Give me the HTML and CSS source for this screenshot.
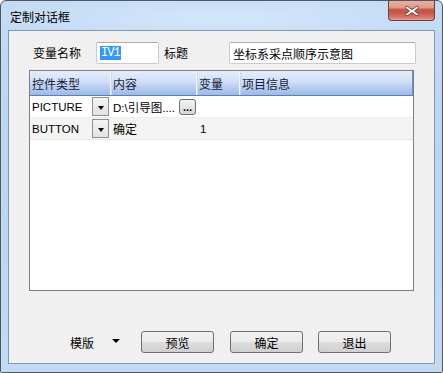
FILE: index.html
```html
<!DOCTYPE html>
<html>
<head>
<meta charset="utf-8">
<link rel="stylesheet" href="styles.css">
</head>
<body>
<div class="window">
  <div class="titlebar">
    <span class="title">定制对话框</span>
    <div class="close">
      <svg width="16" height="12" viewBox="0 0 16 12">
        <path d="M3 1 L8 4.5 L13 1 L15 2.5 L10.5 6 L15 9.5 L13 11 L8 7.5 L3 11 L1 9.5 L5.5 6 L1 2.5 Z" fill="#ffffff" stroke="#5a2a22" stroke-width="0.8" stroke-linejoin="round"/>
      </svg>
    </div>
  </div>
  <div class="client">
    <div class="fields">
      <span class="lbl lbl1">变量名称</span>
      <div class="input small"><span class="sel">IV1</span></div>
      <span class="lbl lbl2">标题</span>
      <div class="input wide">坐标系采点顺序示意图</div>
    </div>
    <div class="grid">
      <div class="thead">
        <div class="th c1">控件类型</div>
        <div class="th c2">内容</div>
        <div class="th c3">变量</div>
        <div class="th c4">项目信息</div>
      </div>
      <div class="row r1">
        <div class="td c1"><span class="en">PICTURE</span><span class="combo"><span class="arrow"></span></span></div>
        <div class="td c2"><span class="en">D:\引导图....</span><span class="dots">...</span></div>
        <div class="td c3"></div>
        <div class="td c4"></div>
      </div>
      <div class="row r2">
        <div class="td c1"><span class="en">BUTTON</span><span class="combo"><span class="arrow"></span></span></div>
        <div class="td c2">确定</div>
        <div class="td c3"><span class="en">1</span></div>
        <div class="td c4"></div>
      </div>
    </div>
    <div class="footer">
      <span class="tpl">模版</span>
      <span class="tri"></span>
      <span class="btn b1">预览</span>
      <span class="btn b2">确定</span>
      <span class="btn b3">退出</span>
    </div>
  </div>
</div>
</body>
</html>
```

FILE: styles.css
```css
html, body {
  margin: 0;
  padding: 0;
  background: #ffffff;
}
body {
  font-family: "Noto Sans CJK SC", "DejaVu Sans", sans-serif;
  font-size: 12px;
  color: #000;
}
.window {
  box-sizing: border-box;
  width: 443px;
  height: 373px;
  border: 1px solid #4f5660;
  border-radius: 6px 6px 2px 2px;
  padding: 0 7px 8px 7px;
  background: linear-gradient(180deg, #c4dbf4 0%, #bcd5f0 40%, #c2daf3 100%);
  display: flex;
  flex-direction: column;
}
.titlebar {
  height: 29px;
  display: flex;
  justify-content: space-between;
  align-items: flex-start;
  background: radial-gradient(ellipse 55% 90% at 50% 60%, #d3e7fc 0%, rgba(211,231,252,0) 100%);
  margin: 0 -7px;
  padding: 0 7px;
}
.title {
  margin-left: 2px;
  margin-top: 7px;
  line-height: 17px;
  font-size: 12px;
  color: #000;
}
.close {
  box-sizing: border-box;
  width: 47px;
  height: 20px;
  margin-top: 0;
  border: 1px solid #7c3a31;
  border-top: none;
  border-radius: 0 0 4px 4px;
  background: linear-gradient(180deg, #eab0a2 0%, #de9a8a 35%, #c8574b 45%, #c55548 60%, #d5766a 85%, #e2a091 100%);
  display: flex;
  align-items: center;
  justify-content: center;
}
.client {
  box-sizing: border-box;
  height: 334px;
  border: 1px solid #8497ad;
  background: #f0f0f0;
  display: flex;
  flex-direction: column;
}
.fields {
  display: flex;
  align-items: center;
  margin-top: 11px;
  height: 22px;
}
.lbl {
  line-height: 16px;
}
.lbl1 {
  margin-left: 24px;
  width: 63px;
}
.lbl2 {
  margin-left: 5px;
  width: 65px;
}
.input {
  box-sizing: border-box;
  height: 22px;
  border: 1px solid #c7ccd3;
  border-top-color: #abadb3;
  border-radius: 2px;
  background: #ffffff;
  display: flex;
  align-items: center;
}
.small {
  width: 63px;
  padding-left: 3px;
}
.wide {
  width: 187px;
  padding-left: 3px;
}
.sel {
  background: #3399ff;
  color: #ffffff;
  font-family: "Liberation Mono", "DejaVu Sans Mono", monospace;
  font-size: 12px;
  line-height: 14px;
  padding: 0 1px;
  letter-spacing: -1px;
}
.grid {
  box-sizing: border-box;
  margin-top: 6px;
  margin-left: 20px;
  width: 385px;
  height: 221px;
  border: 1px solid #7b7f86;
  background: #ffffff;
}
.thead {
  display: flex;
  height: 25px;
  box-sizing: border-box;
  border-bottom: 1px solid #5b7fb9;
  background: linear-gradient(180deg, #e4eefc 0%, #d3e2f8 40%, #b7cdef 70%, #9cb9e6 100%);
  border-right: 1px solid #6f8fc4;
}
.th {
  box-sizing: border-box;
  display: flex;
  align-items: center;
  padding-left: 2px;
  color: #1a1a3a;
}
.thead .c2, .thead .c3, .thead .c4 {
  border-left: 1px solid #f2f7fe;
  box-shadow: inset 1px 0 0 #c8d8f0;
}
.c1 { width: 80px; }
.c2 { width: 86px; }
.c3 { width: 43px; }
.c4 { flex: 1; }
.thead .c1 { padding-left: 2px; }
.row {
  display: flex;
  height: 22px;
  box-sizing: border-box;
  border-bottom: 1px solid #ececec;
}
.r2 {
  background: #f4f4f2;
  border-bottom: 1px solid #e6e6e6;
}
.td {
  box-sizing: border-box;
  display: flex;
  align-items: center;
  padding-left: 2px;
}
.td.c2 {
  padding-left: 3px;
  justify-content: space-between;
}
.td.c3 {
  padding-left: 4px;
}
.td.c1 {
  justify-content: space-between;
  padding-right: 1px;
}
.en {
  font-family: "Liberation Sans", "Noto Sans CJK SC", sans-serif;
  font-size: 11.5px;
  color: #000;
}
.combo {
  box-sizing: border-box;
  width: 17px;
  height: 19px;
  border: 1px solid #8e8f8f;
  background: linear-gradient(180deg, #f5f5f5 0%, #e2e2e2 100%);
  display: flex;
  align-items: center;
  justify-content: center;
}
.arrow {
  width: 0;
  height: 0;
  border-left: 3.5px solid transparent;
  border-right: 3.5px solid transparent;
  border-top: 4px solid #000;
  margin-top: 2px;
}
.dots {
  box-sizing: border-box;
  width: 17px;
  height: 16px;
  border: 1px solid #707070;
  border-radius: 3px;
  background: linear-gradient(180deg, #f4f4f4 0%, #e6e6e6 50%, #d6d6d6 100%);
  font-family: "Liberation Sans", sans-serif;
  font-size: 11px;
  line-height: 10px;
  text-align: center;
  display: flex;
  align-items: flex-end;
  justify-content: center;
  padding-bottom: 2px;
  font-weight: bold;
}
.footer {
  display: flex;
  align-items: center;
  margin-top: 40px;
  height: 22px;
  padding-left: 61px;
}
.tpl {
  width: 24px;
}
.tri {
  width: 0;
  height: 0;
  margin-left: 18px;
  border-left: 4.5px solid transparent;
  border-right: 4.5px solid transparent;
  border-top: 4px solid #000;
  margin-top: -2px;
}
.btn {
  box-sizing: border-box;
  width: 73px;
  height: 22px;
  border: 1px solid #707070;
  border-radius: 3px;
  background: linear-gradient(180deg, #f2f2f2 0%, #ebebeb 48%, #dddddd 52%, #cfcfcf 100%);
  display: flex;
  align-items: center;
  justify-content: center;
}
.b1 { margin-left: 21px; }
.b2 { margin-left: 16px; }
.b3 { margin-left: 15px; }
```
